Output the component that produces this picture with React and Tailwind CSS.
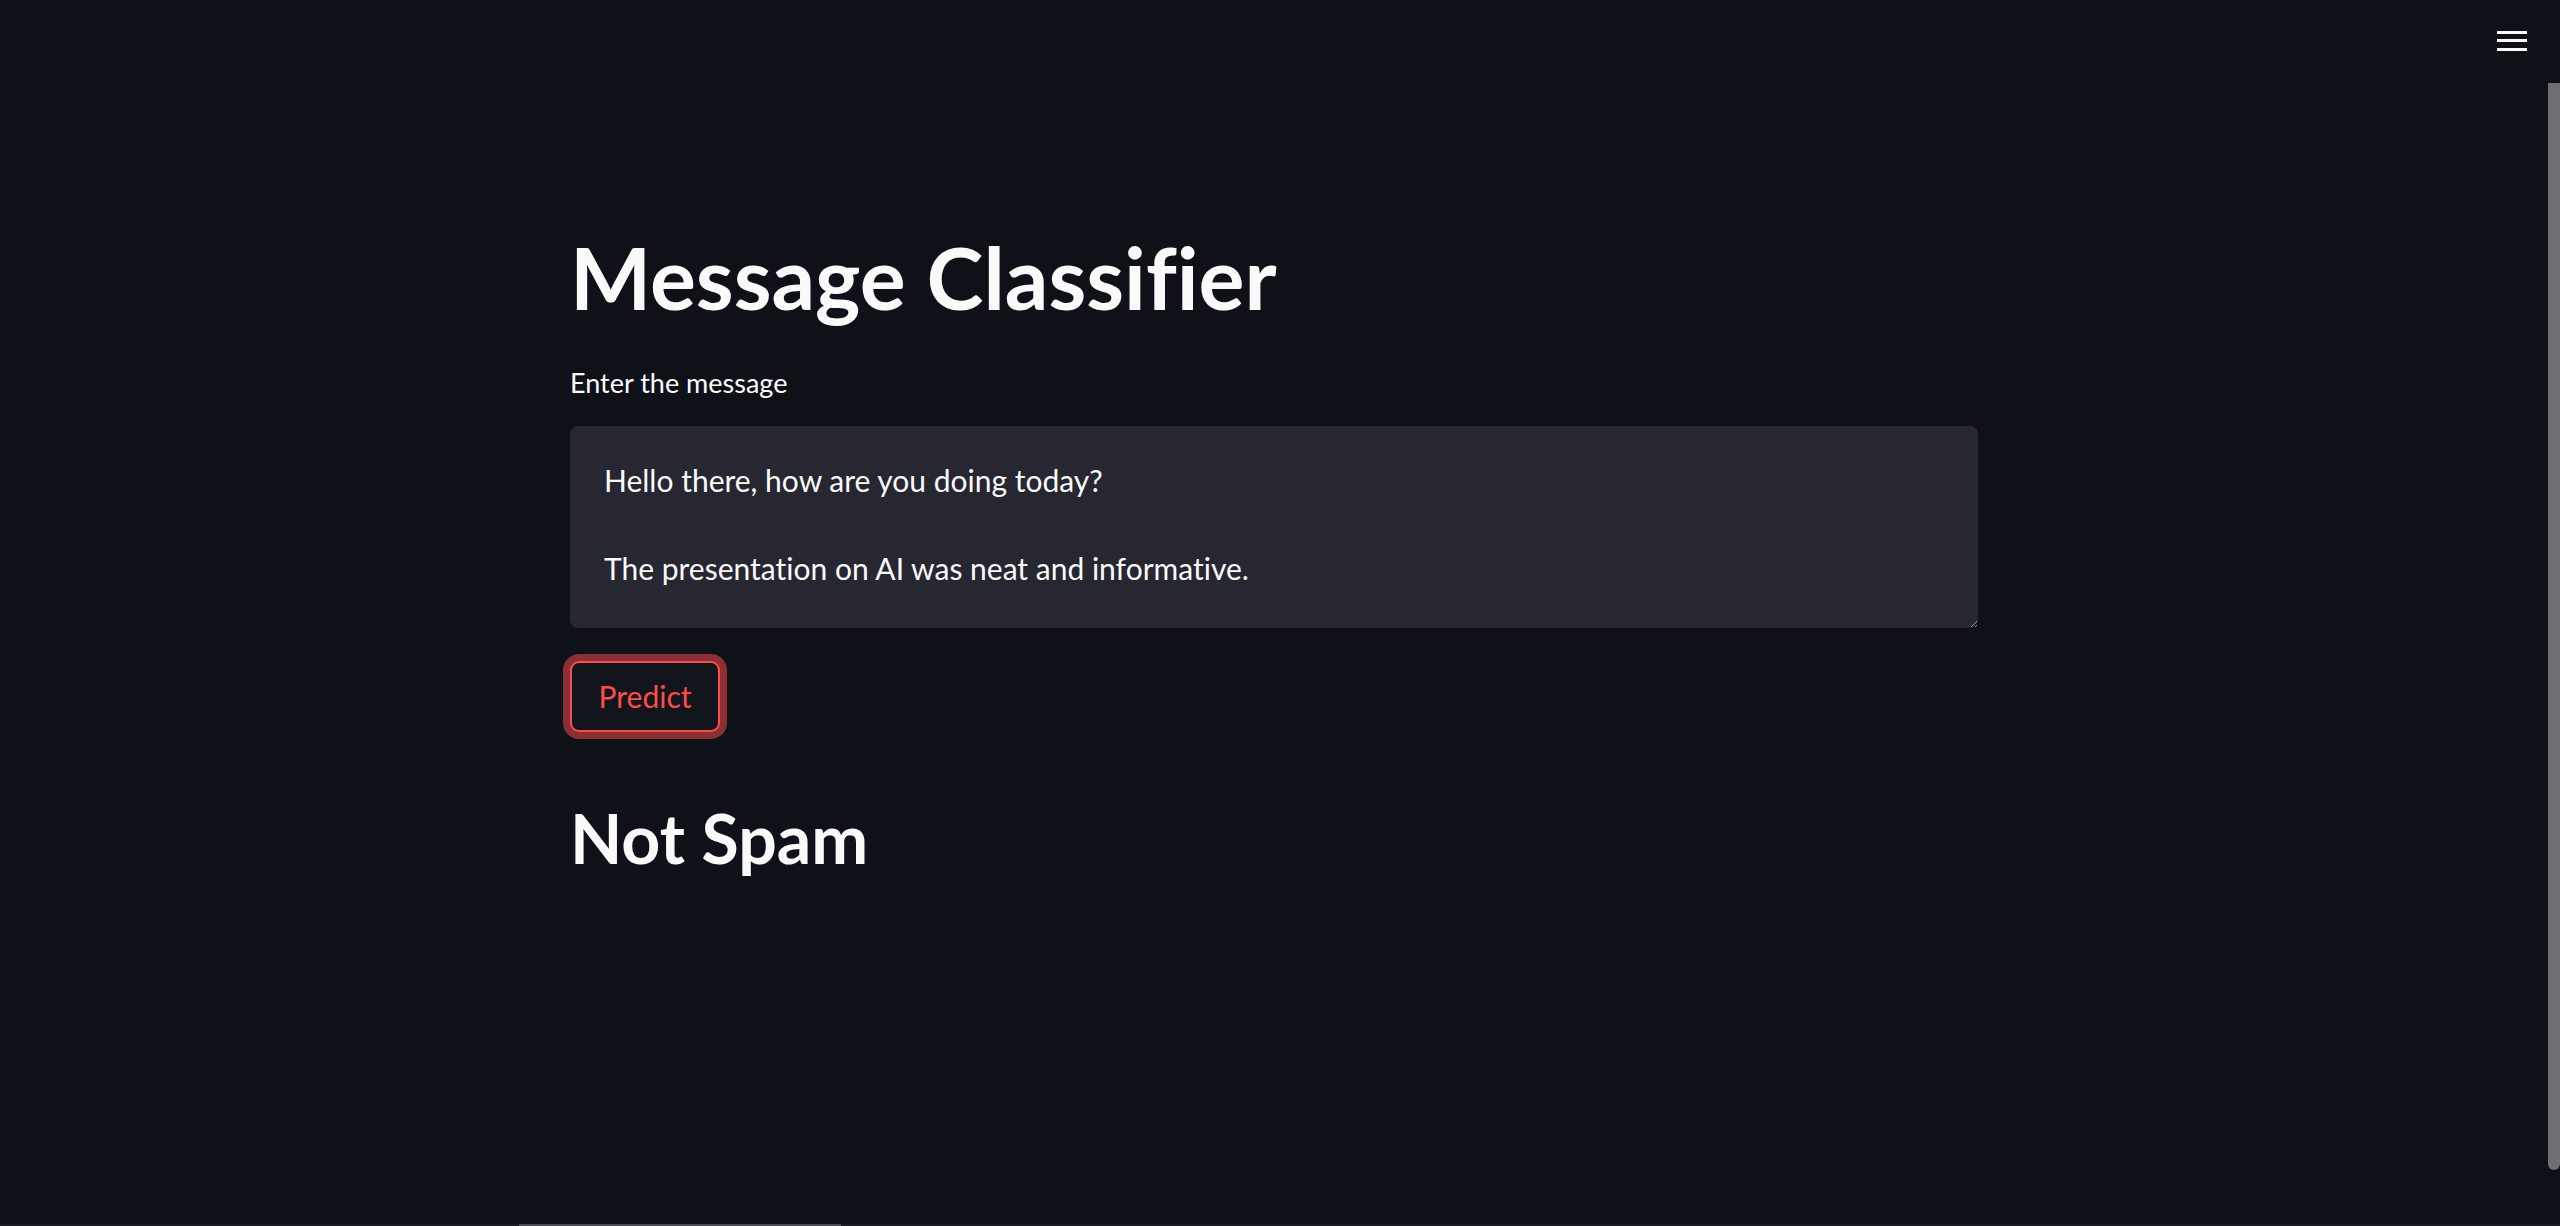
import { useState } from "react";

export default function App() {
  const [message, setMessage] = useState(
    "Hello there, how are you doing today?\n\nThe presentation on AI was neat and informative."
  );

  return (
    <div className="relative flex h-screen w-full flex-col overflow-hidden bg-[#0e1117] font-['Lato','Liberation_Sans',sans-serif] text-[#fafafa] [font-variant-ligatures:none]">
      {/* header menu */}
      <button className="absolute right-[33px] top-[31px]">
        <svg width="30" height="21" viewBox="0 0 30 21">
          <rect x="0" y="0" width="30" height="3" fill="#fafafa" />
          <rect x="0" y="8" width="30" height="3" fill="#fafafa" />
          <rect x="0" y="17" width="30" height="3" fill="#fafafa" />
        </svg>
      </button>

      <div className="flex flex-1">
        <main className="flex-1">
          <div className="mx-auto w-[1408px] pt-[225px]">
            <h1 className="text-[86px] font-bold leading-[103px]">Message Classifier</h1>

            <label className="mt-[37px] block text-[27px] leading-[36px]">Enter the message</label>
            <textarea
              value={message}
              onChange={(e) => setMessage(e.target.value)}
              className="mt-[25px] block h-[202px] w-full resize-y rounded-[8px] bg-[#262730] px-[34px] py-[32px] text-[30px] leading-[44px] text-[#fafafa] outline-none [color-scheme:dark] [font-variant-ligatures:none]"
            />

            <div className="mt-[33px]">
              <button className="h-[71px] w-[150px] rounded-[9px] border-2 border-[#ff4b4b] bg-[#12151c] text-[30px] text-[#ff4b4b] shadow-[0_0_0_7px_#8a2f33]">
                Predict
              </button>
            </div>

            <h2 className="mt-[65px] text-[68px] font-bold leading-[82px]">Not Spam</h2>
          </div>
        </main>

        {/* vertical scrollbar */}
        <div className="w-[12px] pt-[83px] pb-[54px]">
          <div className="h-full rounded-b-full bg-[#6e6f73]" />
        </div>
      </div>

      {/* horizontal scrollbar */}
      <div className="h-[2px] bg-[#1c1d21] pl-[519px]">
        <div className="h-full w-[322px] bg-[#4b4c50]" />
      </div>
    </div>
  );
}
